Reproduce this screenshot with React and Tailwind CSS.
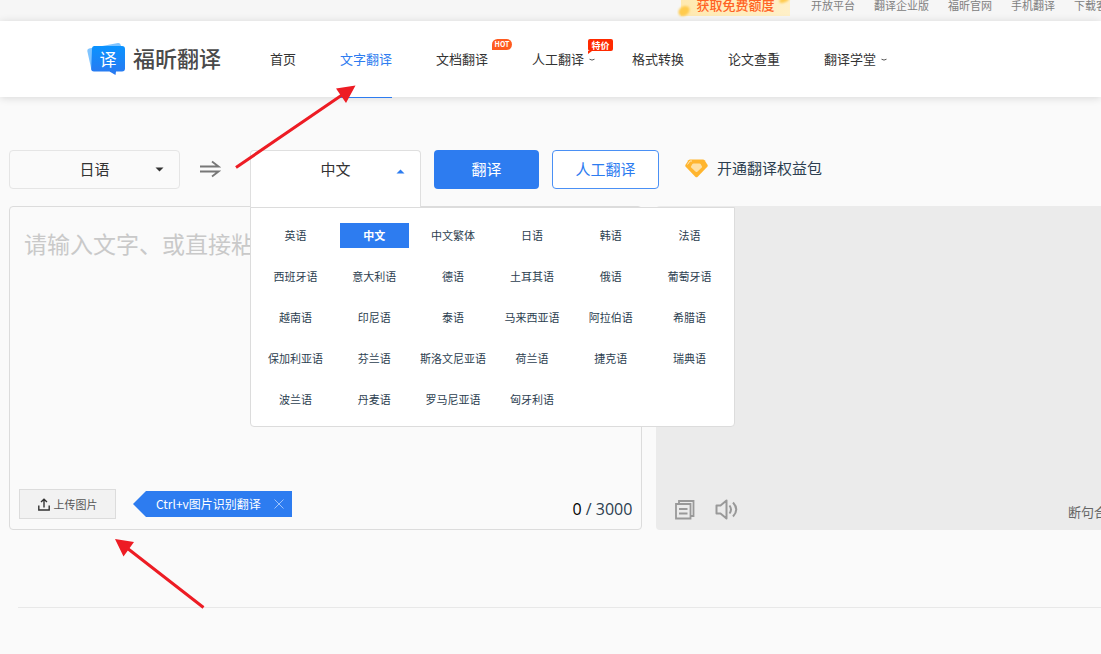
import { useState } from 'react'

const TOP_LINKS = ['开放平台', '翻译企业版', '福昕官网', '手机翻译', '下载客']

const NAV = [
  { label: '首页' },
  { label: '文字翻译', active: true },
  { label: '文档翻译', badge: 'hot' },
  { label: '人工翻译', badge: 'sale', more: true },
  { label: '格式转换' },
  { label: '论文查重' },
  { label: '翻译学堂', more: true },
]

const LANGS = [
  '英语', '中文', '中文繁体', '日语', '韩语', '法语',
  '西班牙语', '意大利语', '德语', '土耳其语', '俄语', '葡萄牙语',
  '越南语', '印尼语', '泰语', '马来西亚语', '阿拉伯语', '希腊语',
  '保加利亚语', '芬兰语', '斯洛文尼亚语', '荷兰语', '捷克语', '瑞典语',
  '波兰语', '丹麦语', '罗马尼亚语', '匈牙利语',
]

function TopBar() {
  return (
    <div className="flex h-[21px] items-start justify-end bg-[#f6f6f6]">
      <a
        href="#quota"
        className="relative mr-[21px] flex h-4 w-[109px] items-center justify-center bg-linear-to-r from-[#ffe9b0] to-[#fff0c8] pb-1.5 text-[13px] leading-[10px] font-medium text-[#ff6224]"
      >
        <svg className="absolute -left-1 top-0" width="116" height="18" viewBox="0 0 116 18">
          <defs>
            <filter id="coinBlur">
              <feGaussianBlur stdDeviation="1" />
            </filter>
          </defs>
          <g fill="#ffcb4d" filter="url(#coinBlur)">
            <ellipse cx="7" cy="11" rx="6" ry="4.500" transform="rotate(-35 7 11)" />
            <ellipse cx="107" cy="0" rx="5" ry="2.500" transform="rotate(-20 107 0)" />
          </g>
        </svg>
        <span className="relative">获取免费额度</span>
      </a>
      <nav className="-mr-1.5 flex gap-[19px] text-[11px] leading-[10px] whitespace-nowrap text-[#808080]">
        {TOP_LINKS.map((t) => (
          <a key={t} href="#top">{t}</a>
        ))}
      </nav>
    </div>
  )
}

function Logo() {
  return (
    <a href="#home" className="flex items-center gap-2">
      <span className="relative flex h-[34px] w-[38px] items-center justify-center">
        <svg className="absolute inset-0" width="38" height="34" viewBox="0 0 38 34">
          <defs>
            <linearGradient id="logoBlue" x1="0" y1="0" x2="0" y2="1">
              <stop offset="0" stopColor="#0a93ff" />
              <stop offset="1" stopColor="#2b78f0" />
            </linearGradient>
          </defs>
          <path d="M2 6.500 L31 1 Q33.500 .8 34 4 L36 26 L7 29 Q4.500 29 4 26 L.3 9 Q0 7 2 6.500Z" fill="#7fc4ff" />
          <path d="M7.500 4 H35 Q38 4 38 7 V26.500 Q38 29.500 35 29.500 H29 L28.500 33 L22.500 29.500 H7 Q4 29.500 4.200 26.500 L5 7 Q5 4 7.500 4Z" fill="url(#logoBlue)" />
        </svg>
        <span className="relative ml-1 text-[17px] leading-5 text-white">译</span>
      </span>
      <span className="pb-1 text-[22px] leading-8 font-medium text-[#4a4a4a]">福昕翻译</span>
    </a>
  )
}

function Badge({ kind }) {
  if (kind === 'hot') {
    return (
      <span className="absolute -top-2.5 left-14 flex h-[11px] w-5 items-center justify-center rounded-full rounded-bl-none bg-[#ff5a1f] text-[7px] leading-none font-bold text-white">
        HOT
      </span>
    )
  }
  return (
    <span className="absolute -top-2.5 left-14 flex h-3 w-[25px] items-center justify-center rounded-xs bg-[#ff2a00] text-[9px] leading-none font-bold text-white">
      特价
      <svg className="absolute top-3 left-0" width="4" height="3" viewBox="0 0 4 3">
        <path d="M0 0H4L0 3Z" fill="#ff2a00" />
      </svg>
    </span>
  )
}

function Header() {
  return (
    <header className="relative flex h-[76px] items-center bg-white pl-[87px] shadow-[0_1px_8px_rgba(0,0,0,0.14)]">
      <Logo />
      <nav className="ml-[49px] flex h-full gap-11 text-[13px] whitespace-nowrap text-[#333]">
        {NAV.map((n) => (
          <a
            key={n.label}
            href="#nav"
            className={`relative flex h-[77px] items-center border-b ${n.active ? 'border-[#2d7cf0] text-[#2d7cf0]' : 'border-transparent'}`}
          >
            <span className="relative leading-5">
              {n.label}
              {n.badge && <Badge kind={n.badge} />}
            </span>
            {n.more && (
              <svg className="-mr-2 ml-1 w-2" width="8" height="5" viewBox="0 0 8 5" fill="none" stroke="#555">
                <path d="M1.500 2.200Q4 4 6.500 2.200" />
              </svg>
            )}
          </a>
        ))}
      </nav>
    </header>
  )
}

function SourceSelect() {
  return (
    <div className="relative w-[171px]">
      <select
        aria-label="源语言"
        defaultValue="日语"
        className="block h-[39px] w-full appearance-none rounded border border-[#e5e5e5] bg-[#fafafa] text-center text-[15px] text-[#333] [text-align-last:center]"
      >
        {LANGS.map((l) => (
          <option key={l}>{l}</option>
        ))}
      </select>
      <svg className="pointer-events-none absolute top-[17px] right-4" width="9" height="5" viewBox="0 0 9 5">
        <path d="M.5 .5H8.500L4.500 4.500Z" fill="#333" />
      </svg>
    </div>
  )
}

function TargetSelect() {
  const [lang, setLang] = useState('中文')
  return (
    <div className="relative z-10 ml-[29px] h-[39px] w-[171px]">
      <button
        type="button"
        aria-haspopup="listbox"
        aria-expanded="true"
        className="relative h-[58px] w-full rounded-t border border-b-0 border-[#dfdfdf] bg-white pb-5 text-[15px] text-[#333]"
      >
        {lang}
        <svg className="absolute top-[18px] right-[15px]" width="9" height="5" viewBox="0 0 9 5">
          <path d="M.5 4.500H8.500L4.500 .5Z" fill="#2d7cf0" />
        </svg>
      </button>
      <div
        role="listbox"
        aria-label="目标语言"
        className="absolute top-[57px] left-0 grid w-[485px] grid-cols-6 gap-x-2.5 gap-y-4 rounded-b border border-[#dcdcdc] bg-white px-2.5 pt-[15px] pb-3.5 text-[11px] text-[#2c3e50]"
      >
        {LANGS.map((l) => (
          <button
            key={l}
            type="button"
            role="option"
            aria-selected={l === lang}
            onClick={() => setLang(l)}
            className={`flex h-[25px] items-center justify-center whitespace-nowrap ${l === lang ? 'bg-[#2d7cf0] font-bold text-white' : ''}`}
          >
            {l}
          </button>
        ))}
      </div>
    </div>
  )
}

function Toolbar() {
  return (
    <div className="flex items-center whitespace-nowrap">
      <SourceSelect />
      <button type="button" aria-label="切换语言" className="ml-5 pb-0.5">
        <svg width="21" height="18" viewBox="0 0 21 18" fill="none" stroke="#777" strokeWidth="1.800">
          <path d="M0 6.500H18.500L12 1.500M0 11.500H18.500L12 16.500" />
        </svg>
      </button>
      <TargetSelect />
      <button type="button" className="ml-[13px] h-[39px] w-[105px] rounded bg-[#2d7cf0] text-[15px] text-white">
        翻译
      </button>
      <button type="button" className="ml-[13px] h-[39px] w-[107px] rounded border border-[#4a90f5] bg-white text-[15px] text-[#2d7cf0]">
        人工翻译
      </button>
      <a href="#vip" className="ml-[26px] flex items-center gap-[9px] pb-0.5 text-[15px] text-[#2c3e50]">
        <svg width="23" height="19" viewBox="0 0 23 19">
          <path d="M5 .5H18Q19 .5 19.600 1.300L22.600 6Q23 7 22.300 7.800L12.700 17.700Q11.500 18.900 10.300 17.700L.7 7.800Q0 7 .4 6L3.400 1.300Q4 .5 5 .5Z" fill="#ffb52e" />
          <path d="M8.500 4.500H14.500Q15.200 4.500 15.600 5L17 7.500Q17.300 8 16.800 8.500L12.300 12.700Q11.500 13.400 10.700 12.700L6.200 8.500Q5.700 8 6 7.500L7.400 5Q7.800 4.500 8.500 4.500Z" fill="#ffe0a3" />
          <path d="M2.500 5.500L5 2H7" fill="none" stroke="#ffe6b5" />
        </svg>
        开通翻译权益包
      </a>
    </div>
  )
}

function SourcePanel() {
  return (
    <section className="flex w-[58%] flex-col rounded border border-[#dcdcdc]">
      <textarea
        aria-label="原文"
        placeholder="请输入文字、或直接粘贴"
        className="block h-[282px] w-full resize-none px-3.5 pt-[18px] text-[23px] leading-9 outline-none placeholder:text-[#c9c9c9]"
      />
      <div className="flex items-center px-[9px] pb-2.5">
        <button type="button" className="flex h-[30px] w-[97px] items-center justify-center gap-1 border border-[#dcdcdc] bg-[#f2f2f2] text-[11px] text-[#555]">
          <svg width="12" height="13" viewBox="0 0 12 13" fill="none" stroke="#333" strokeWidth="1.400">
            <path d="M6 9.500V1.500M3 4L6 1.200L9 4M.8 7.500V12H11.200V7.500" />
          </svg>
          上传图片
        </button>
        <div className="ml-[17px] flex h-[26px] w-[159px] items-center bg-[#2d7cf0] pl-[23px] text-xs text-white [clip-path:polygon(13px_0,100%_0,100%_100%,13px_100%,0_50%)]">
          <span className="whitespace-nowrap">Ctrl+v图片识别翻译</span>
          <button type="button" aria-label="关闭" className="mr-2 ml-auto">
            <svg width="10" height="10" viewBox="0 0 10 10" stroke="#9cc3fb">
              <path d="M.5 .5L9.500 9.500M9.500 .5L.5 9.500" />
            </svg>
          </button>
        </div>
        <span className="ml-auto pt-2.5 font-['Open_Sans',sans-serif] text-base leading-5 text-[#2c3e50]">
          <span className="text-black">0</span> / 3000
        </span>
      </div>
    </section>
  )
}

function ResultPanel() {
  return (
    <section className="ml-3.5 flex min-w-0 flex-1 items-end rounded-l bg-[#ebebeb] pb-2.5 pl-[19px]">
      <button type="button" aria-label="复制">
        <svg width="20" height="20" viewBox="0 0 20 20" fill="none" stroke="#999" strokeWidth="1.800">
          <path d="M4 3.500V1H18.500V16H16M1 4H15.500V18.500H1ZM4 9H12.500M4 13.500H12.500" />
        </svg>
      </button>
      <button type="button" aria-label="朗读" className="ml-5">
        <svg width="23" height="21" viewBox="0 0 23 21" fill="none" stroke="#999" strokeWidth="2" strokeLinejoin="round">
          <path d="M1.500 6.500H5.500L11.500 1.500V19.500L5.500 14.500H1.500ZM14.500 6.500Q17.500 10.500 14.500 14.500M18 3.500Q24.500 10.500 18 17.500" />
        </svg>
      </button>
      <span className="-mr-1.5 ml-auto text-[13px] leading-4 whitespace-nowrap text-[#666]">断句合</span>
    </section>
  )
}

function Arrows() {
  return (
    <svg className="pointer-events-none absolute top-0 left-0 z-20" width="400" height="620" viewBox="0 0 400 620" fill="#ed1c24" stroke="#ed1c24">
      <path d="M236 167.500L342 95M203.500 607.500L127 548" strokeWidth="3" />
      <path d="M355.500 85.500L336 88.500L346 103ZM115 539L134 542L123.500 556.500Z" stroke="none" />
    </svg>
  )
}

export default function App() {
  return (
    <div className="relative min-h-screen overflow-hidden bg-[#fafafa] font-['Noto_Sans_CJK_SC',sans-serif]">
      <TopBar />
      <Header />
      <main className="pt-[53px] pl-[9px]">
        <Toolbar />
        <div className="mt-[17px] flex">
          <SourcePanel />
          <ResultPanel />
        </div>
        <hr className="mt-[77px] ml-[9px] border-[#e8e8e8]" />
      </main>
      <Arrows />
    </div>
  )
}
